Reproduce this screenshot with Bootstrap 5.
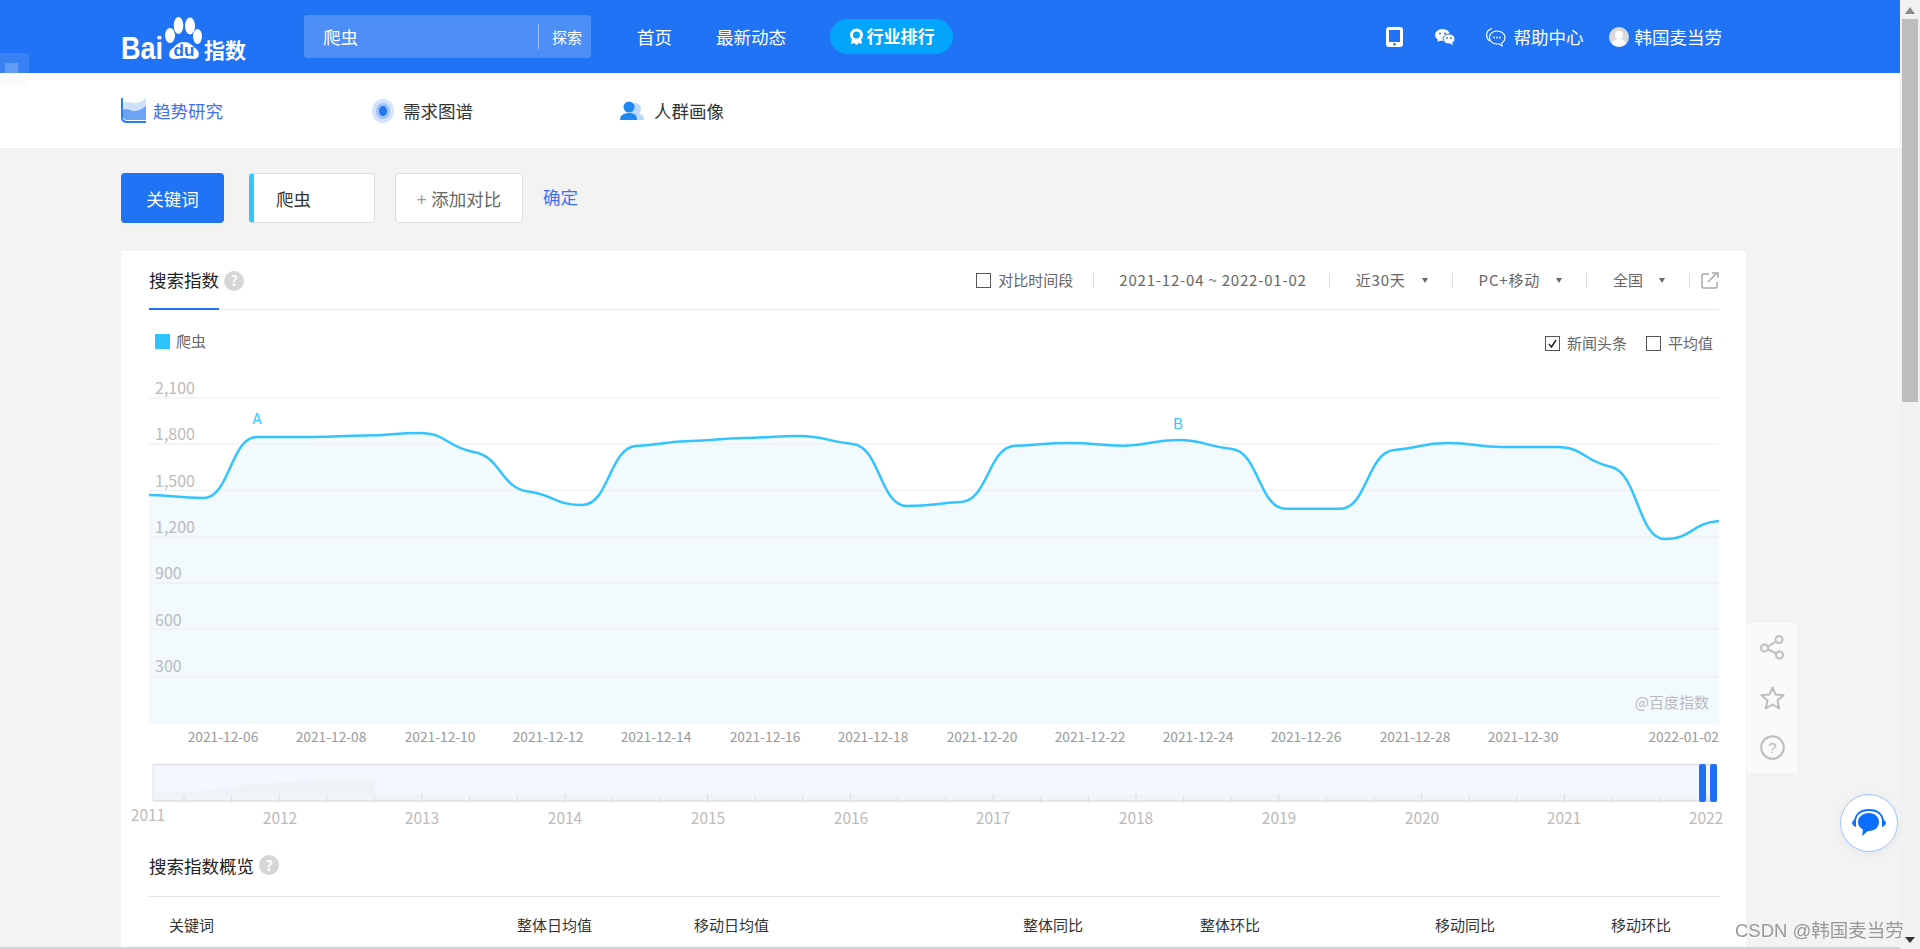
<!DOCTYPE html>
<html lang="zh-CN">
<head>
<meta charset="utf-8">
<title>百度指数</title>
<link href="https://cdn.jsdelivr.net/npm/bootstrap@5.3.0/dist/css/bootstrap.min.css" rel="stylesheet">
<style>
html,body{height:100%;overflow:hidden}
body{font-family:"Noto Sans CJK SC","Liberation Sans",sans-serif;background:#f3f3f3;color:#333;font-size:15px;line-height:1.2}
.shell{height:949px}
.pagecol{width:1900px;height:949px;overflow:hidden;border-bottom:2px solid #d4d4d4}
.sb{width:20px;background:#f1f1f1;padding-left:2px;height:949px}
.sb-up{width:0;height:0;border:5px solid transparent;border-bottom:7px solid #8a8a8a;border-top:0;margin:7px 0 5px 3px}
.sb-thumb{width:16px;height:383px;background:#bdbdbd}
.sb-down{width:0;height:0;border:5px solid transparent;border-top:6px solid #333;border-bottom:0;margin:auto 0 6px 3px}
.topbar{height:73px;background:#2173f5;color:#fff;padding:0 178px 0 121px;font-size:17.5px}
.logo{display:block}
.searchbox{width:287px;height:43px;margin-left:58px;background:rgba(255,255,255,.2);border-radius:3px;padding:0 9px 0 19px}
.searchbox .sdiv{width:1px;height:25px;background:rgba(255,255,255,.45);margin:0 13px 0 auto}
.searchbox .sbtn{font-size:15px}
.tlink{color:#fff;text-decoration:none}
.tl1{margin-left:46px}.tl2{margin-left:44px}
.rankpill{width:123px;height:35px;margin-left:44px;border-radius:18px;background:#02a4fc;font-weight:700;font-size:17px;gap:3px}
.ico-wx{margin-left:32px}.ico-help{margin-left:31px;margin-right:8px}.ico-av{margin-left:25px;margin-right:6px}
.subnav{height:76px;background:#fff;padding-left:121px;border-bottom:1px solid #eee;font-size:17.5px}
.subnav span{color:#333}
.subnav .sub-act{color:#3f6ff2;margin-left:7px}
.sub2{margin-left:149px}.sub3{margin-left:147px}
.sub-tx{margin-left:9px}
.kwrow{padding:24px 0 0 121px;height:102px;font-size:17.5px}
.kwbtn{width:103px;height:50px;background:#2173f5;color:#fff;border-radius:4px;border:0;font-size:17.5px;padding:0}
.kwbox{width:126px;height:50px;margin-left:25px;background:#fff;border:1px solid #ddd;border-left:5px solid #33c6fd;border-radius:4px;padding-left:22px}
.kwadd{width:128px;height:50px;margin-left:20px;background:#fff;border:1px solid #ddd;border-radius:4px;color:#666}
.kwadd .plus{color:#999;margin-right:5px}
.kwok{margin-left:20px;color:#3f6ff2;height:50px;margin-top:-2px}
.mainpanel{width:1625px;margin-left:121px;background:#fff;padding:0 27px 0 28px;height:700px}
.tabrow{height:59px;border-bottom:1px solid #eaeaea}
.tabname{font-size:17.5px;color:#222;height:59px;width:70px;border-bottom:2px solid #2173f5;padding-top:18px;white-space:nowrap;margin-bottom:-1px}
.tabq{margin-top:1px}
.qmark{width:20px;height:20px;border-radius:50%;background:#d6d6d6;color:#fff;font-size:14px;font-weight:700;margin-left:5px}
.tool{font-size:15px;color:#666;white-space:nowrap}
.latin{letter-spacing:.8px}
.cbx{width:15px;height:15px;border:1.5px solid #555;background:#fff;display:inline-block;flex:none}
.cbx-l{margin-left:7px}
.tsep{width:1px;height:15px;background:#ddd}
.s1{margin:0 25px 0 20px}.s2{margin:0 26px 0 22px}.s3{margin:0 26px 0 24px}.s4{margin:0 26px 0 24px}.s5{margin:0 11px 0 24px}
.caret-s{width:0;height:0;border:3.5px solid transparent;border-top:5px solid #666;border-bottom:0;margin-left:16px}
.legendrow{height:70px;padding:22px 6px 0 6px;font-size:15px;color:#666}
.lg-sq{width:15px;height:15px;background:#2ec4fb;margin-right:6px}
.lg-r{margin-top:2px}
.lg-gap{margin-left:19px}
.cb-on{display:flex;align-items:center;justify-content:center}
.chartsvg,.slidersvg{display:block;font-family:"Noto Sans CJK SC","Liberation Sans",sans-serif}
.slidersvg{margin-left:-24px}
.ovt{font-size:17.5px;color:#222;height:63px;padding-top:21px;border-bottom:1px solid #e2e2e2}
.ovgrid{display:grid;grid-template-columns:348px 177px 329px 177px 235px 176px 1fr;padding:19px 0 0 20px;font-size:15px;color:#333}
.lefttab{left:0;top:53px;width:29px;height:33px;background:rgba(215,222,230,.13);border-radius:0 3px 3px 0}
.lefttab i{display:block;width:13px;height:14px;margin:10px 0 0 5px;background:rgba(255,255,255,.22)}
.sidetools{left:1747px;top:623px;width:50px;height:150px;background:#fafafa;padding-top:12px;gap:25.5px}
.chatbtn{left:1840px;top:794px;width:58px;height:58px;border-radius:50%;background:#fff;border:1px solid #9cc4ff;box-shadow:0 2px 10px rgba(0,0,0,.06)}
.wmark{left:1735px;top:920px;font-size:18.5px;color:#999;white-space:nowrap;font-family:"Liberation Sans","Noto Sans CJK SC",sans-serif}
</style>
</head>
<body>
<div class="shell d-flex">
  <div class="pagecol flex-shrink-0">
    <header class="topbar d-flex align-items-center">
      <svg class="logo" width="125" height="54" viewBox="0 -5 125 54" fill="#fff">
        <text x="0" y="44" font-family="Liberation Sans" font-weight="700" font-size="31" textLength="42" lengthAdjust="spacingAndGlyphs">Bai</text>
        <ellipse cx="57.500" cy="10.500" rx="4.800" ry="8.500"/><ellipse cx="69" cy="11" rx="5" ry="8.500"/>
        <ellipse cx="49" cy="20.500" rx="5" ry="7.500"/><ellipse cx="76.500" cy="21.500" rx="4.500" ry="7.500"/>
        <path d="M63 27c5 0 8 3 11 6 5 3 6 11-2 11-3 0-6-1-9-1s-6 1-9 1c-8 0-7-8-2-11 3-3 6-6 11-6z"/>
        <text x="63" y="41" text-anchor="middle" font-family="Liberation Sans" font-weight="700" font-size="17" fill="#2173f5">du</text>
        <text x="83" y="43" font-family="Noto Sans CJK SC" font-weight="700" font-size="21" textLength="42">指数</text>
      </svg>
      <div class="searchbox d-flex align-items-center"><span>爬虫</span><i class="sdiv"></i><span class="sbtn">探索</span></div>
      <a class="tlink tl1" href="#">首页</a>
      <a class="tlink tl2" href="#">最新动态</a>
      <div class="rankpill d-flex align-items-center justify-content-center">
        <svg width="15" height="18" viewBox="0 0 15 18"><circle cx="7.500" cy="7" r="5" fill="none" stroke="#fff" stroke-width="3"/><path d="M3 11l-1 5 3-1 2.500 2 2.500-2 3 1-1-5z" fill="#fff"/></svg>
        <span>行业排行</span>
      </div>
      <div class="ms-auto d-flex align-items-center">
        <svg width="17" height="20" viewBox="0 0 17 20"><rect width="17" height="20" rx="3" fill="#fff"/><rect x="3" y="3" width="11" height="12" fill="#2173f5"/><circle cx="8.500" cy="17.200" r="1.300" fill="#2173f5"/></svg>
        <svg class="ico-wx" width="20" height="16" viewBox="0 0 20 16" fill="#fff"><ellipse cx="7.500" cy="6" rx="7.500" ry="6"/><path d="M3 10l-.5 3 3.500-2z"/><ellipse cx="14" cy="10" rx="6" ry="5" stroke="#2173f5"/><path d="M17 13.500l1 2.500-3.500-1.500z"/><g fill="#2173f5"><circle cx="5" cy="4.500" r="1"/><circle cx="10" cy="4.500" r="1"/><circle cx="12" cy="9" r=".9"/><circle cx="16" cy="9" r=".9"/></g></svg>
        <svg class="ico-help" width="20" height="20" viewBox="0 0 20 20" fill="none" stroke="#fff" stroke-width="1.100"><path d="M6 1.500C2.500 2.500.6 5 .6 8c0 2.500 1 4.500 2.900 6"/><path d="M11 4c4.500 0 8 2.800 8 6.500 0 2.300-1.300 4.300-3.300 5.400l.3 3-3-2.100c-.6.200-1.300.2-2 .2-4.500 0-7.500-2.800-7.500-6.500S6.500 4 11 4z"/><g fill="#fff" stroke="none"><circle cx="8" cy="10.500" r=".9"/><circle cx="11" cy="10.500" r=".9"/><circle cx="14" cy="10.500" r=".9"/></g></svg>
        <span>帮助中心</span>
        <svg class="ico-av" width="20" height="20" viewBox="0 0 20 20"><circle cx="10" cy="10" r="10" fill="#d9d9d9"/><circle cx="10" cy="8" r="4" fill="#fff"/><path d="M3 17c1-4 4-5 7-5s6 1 7 5a10 10 0 0 1-14 0z" fill="#fff"/></svg>
        <span>韩国麦当劳</span>
      </div>
    </header>

    <nav class="subnav d-flex align-items-center">
      <svg width="25" height="25" viewBox="0 0 25 25"><path d="M1 0v19c0 3 2 5 5 5h19" fill="none" stroke="#2b7cf0" stroke-width="2"/><path d="M2 5c4-3 7 0 11 0s7-1 12-5v22H6c-2 0-4-2-4-4z" fill="#cfe0fb"/><path d="M2 12c4-3 7 1 11 1s8-2 12-5v14H6c-2 0-4-2-4-4z" fill="#6ba3f5"/></svg>
      <span class="sub-act">趋势研究</span>
      <svg class="sub2" width="22" height="24" viewBox="0 0 22 24"><ellipse cx="11" cy="12" rx="11" ry="12" fill="#d3e4fc"/><ellipse cx="11" cy="12" rx="7" ry="8" fill="#9dc2f8"/><ellipse cx="11" cy="12" rx="4" ry="5" fill="#2277ef"/></svg>
      <span class="sub-tx">需求图谱</span>
      <svg class="sub3" width="25" height="20" viewBox="0 0 25 20"><circle cx="15" cy="8" r="6" fill="#bcd8fa"/><path d="M9 19c0-5 3-7 7-7s8 2 8 7z" fill="#bcd8fa"/><circle cx="9" cy="6" r="5.500" fill="#1e88f0"/><path d="M0 19c0-5 4-7 9-7s8 2 8 7z" fill="#1e88f0"/></svg>
      <span class="sub-tx">人群画像</span>
    </nav>

    <section class="kwrow d-flex align-items-start">
      <button class="kwbtn" type="button">关键词</button>
      <div class="kwbox d-flex align-items-center">爬虫</div>
      <div class="kwadd d-flex align-items-center justify-content-center"><span class="plus">+</span>添加对比</div>
      <div class="kwok d-flex align-items-center">确定</div>
    </section>

    <main class="mainpanel">
      <div class="tabrow d-flex align-items-center">
        <div class="tabname d-flex align-items-start">搜索指数</div>
        <div class="qmark tabq d-flex align-items-center justify-content-center">?</div>
        <div class="ms-auto d-flex align-items-center tool">
          <i class="cbx"></i><span class="cbx-l">对比时间段</span><i class="tsep s1"></i>
          <span class="latin">2021-12-04 ~ 2022-01-02</span><i class="tsep s2"></i>
          <span class="latin">近30天</span><i class="caret-s"></i><i class="tsep s3"></i>
          <span class="latin">PC+移动</span><i class="caret-s"></i><i class="tsep s4"></i>
          <span>全国</span><i class="caret-s"></i><i class="tsep s5"></i>
          <svg width="18" height="17" viewBox="0 0 18 17" fill="none" stroke="#aaa" stroke-width="1.500"><path d="M8 2H2.500A1.500 1.500 0 0 0 1 3.500v11A1.500 1.500 0 0 0 2.500 16h12a1.500 1.500 0 0 0 1.500-1.500V10"/><path d="M7 10L16 1M11 1h6v5"/></svg>
        </div>
      </div>
      <div class="legendrow d-flex justify-content-between align-items-start">
        <div class="d-flex align-items-center"><i class="lg-sq"></i><span>爬虫</span></div>
        <div class="d-flex align-items-center lg-r">
          <span class="cbx cb-on"><svg width="11" height="11" viewBox="0 0 11 11" fill="none" stroke="#222" stroke-width="1.500"><path d="M2 6l2.500 3L9 2"/></svg></span><span class="cbx-l">新闻头条</span>
          <i class="cbx lg-gap"></i><span class="cbx-l">平均值</span>
        </div>
      </div>
      <svg id="chart" class="chartsvg" width="1570" height="375" viewBox="149 380 1570 375">
        <path id="area" fill="#f2fafe"/>
        <g stroke="#eff2f5" stroke-width="1.500">
          <path d="M149 398H1719M149 444H1719M149 490.500H1719M149 537H1719M149 583H1719M149 629H1719M149 677H1719"/>
        </g>
        <path id="line" fill="none" stroke="#33c4ff" stroke-width="2.500"/>
        <g fill="#bbb" font-size="16">
          <text x="155" y="394">2,100</text><text x="155" y="440">1,800</text><text x="155" y="487">1,500</text><text x="155" y="533">1,200</text><text x="155" y="579">900</text><text x="155" y="626">600</text><text x="155" y="672">300</text>
        </g>
        <g fill="#33c4ff" font-size="15"><text x="257" y="424" text-anchor="middle">A</text><text x="1178" y="429" text-anchor="middle">B</text></g>
        <text x="1709" y="708" fill="#bbb" font-size="15" text-anchor="end">@百度指数</text>
        <g fill="#999" font-size="13.750" text-anchor="middle">
          <text x="223" y="742">2021-12-06</text><text x="331" y="742">2021-12-08</text><text x="440" y="742">2021-12-10</text><text x="548" y="742">2021-12-12</text><text x="656" y="742">2021-12-14</text><text x="765" y="742">2021-12-16</text><text x="873" y="742">2021-12-18</text><text x="982" y="742">2021-12-20</text><text x="1090" y="742">2021-12-22</text><text x="1198" y="742">2021-12-24</text><text x="1306" y="742">2021-12-26</text><text x="1415" y="742">2021-12-28</text><text x="1523" y="742">2021-12-30</text><text x="1719" y="742" text-anchor="end">2022-01-02</text>
        </g>
      </svg>
      <svg id="slider" class="slidersvg" width="1600" height="79" viewBox="125 755 1600 79">
        <rect x="153" y="765" width="1564" height="36" fill="#f4f8fe"/>
        <rect x="153" y="794" width="1564" height="7" fill="#f1f4f9"/>
        <path d="M153 792h22l40-2 30-5 30-2 30-2 30-1 20-1 20 1v14H153z" fill="#eff2f6"/>
        <path d="M153 764.500H1717M153 801H1717" stroke="#dcdfe4" stroke-width="1.500"/>
        <path d="M153 764v37" stroke="#dcdfe4"/>
        <path id="ticks" stroke="#dcdfe4" stroke-width="1"/>
        <rect x="1699" y="764" width="7" height="38" rx="2" fill="#2070f5"/>
        <rect x="1710" y="764" width="7" height="38" rx="2" fill="#2070f5"/>
        <g fill="#bbb" font-size="15.500" text-anchor="middle">
          <text x="148" y="821">2011</text><text x="280" y="824">2012</text><text x="422" y="824">2013</text><text x="565" y="824">2014</text><text x="708" y="824">2015</text><text x="851" y="824">2016</text><text x="993" y="824">2017</text><text x="1136" y="824">2018</text><text x="1279" y="824">2019</text><text x="1422" y="824">2020</text><text x="1564" y="824">2021</text><text x="1706" y="824">2022</text>
        </g>
      </svg>
      <div class="ovt d-flex align-items-start">搜索指数概览<span class="qmark d-flex align-items-center justify-content-center">?</span></div>
      <div class="ovgrid"><span>关键词</span><span>整体日均值</span><span>移动日均值</span><span>整体同比</span><span>整体环比</span><span>移动同比</span><span>移动环比</span></div>
    </main>
  </div>
  <aside class="sb d-flex flex-column flex-shrink-0"><i class="sb-up"></i><i class="sb-thumb"></i><i class="sb-down"></i></aside>
</div>

<div class="lefttab position-fixed"><i></i></div>

<div class="sidetools position-fixed d-flex flex-column align-items-center">
  <svg width="24" height="25" viewBox="0 0 24 25" fill="none" stroke="#bdbdbd" stroke-width="2"><circle cx="4.500" cy="13" r="3.500"/><circle cx="19" cy="4.500" r="3.500"/><circle cx="19.500" cy="20" r="3.500"/><path d="M8 11.500l8-5M8 14.500l8.500 4"/></svg>
  <svg width="25" height="24" viewBox="0 0 25 24" fill="none" stroke="#bdbdbd" stroke-width="2" stroke-linejoin="round"><path d="M12.500 1.500l3 7 8 .8-6 5.200 1.700 8-6.700-4-6.700 4 1.700-8-6-5.200 8-.8z"/></svg>
  <svg width="25" height="25" viewBox="0 0 25 25"><circle cx="12.500" cy="12.500" r="11.300" fill="none" stroke="#bdbdbd" stroke-width="2"/><text x="12.500" y="18" text-anchor="middle" font-size="15" fill="#bdbdbd" font-family="Liberation Sans">?</text></svg>
</div>

<div class="chatbtn position-fixed d-flex align-items-center justify-content-center">
  <svg width="34" height="28" viewBox="0 0 34 28"><path d="M3 13C3 5 9 1 17 1s14 4 14 12" fill="none" stroke="#0a6fff" stroke-width="1.800"/><path d="M4 10v8C1.500 17 0 15.500 0 14s1.500-3 4-4zM30 10v8c2.500-1 4-2.500 4-4s-1.500-3-4-4z" fill="#0a6fff"/><path d="M17 4c6 0 10 4 10 9s-4 9-10 9h-1l-6 5 1-6.500c-3-1.500-5-4-5-7.500 0-5 5-9 11-9z" fill="#0a6fff"/></svg>
</div>

<div class="wmark position-fixed">CSDN @韩国麦当劳</div>

<script src="https://cdn.jsdelivr.net/npm/bootstrap@5.3.0/dist/js/bootstrap.bundle.min.js"></script>
<script>
(function(){
  var ys=[495,498,437,437,435.5,433,452,491.5,505,446,441,438,436,444,506,502,445.7,443,445.7,440,449,508.7,508.7,450,443,447,447,466.7,539,521];
  var h=1570/29,pts=ys.map(function(y,i){return [149+h*i,y];}),n=pts.length,s=[],m=[];
  for(var i=0;i<n-1;i++)s[i]=(ys[i+1]-ys[i])/h;
  m[0]=s[0]*.2;m[n-1]=s[n-2]*.2;
  for(i=1;i<n-1;i++){m[i]=s[i-1]*s[i]<=0?0:.35*2*s[i-1]*s[i]/(s[i-1]+s[i]);}
  var d="M"+pts[0][0]+" "+pts[0][1];
  for(i=0;i<n-1;i++){
    var k=h*.5;
    d+="C"+(pts[i][0]+k).toFixed(1)+" "+(pts[i][1]+m[i]*k).toFixed(1)+" "+(pts[i+1][0]-k).toFixed(1)+" "+(pts[i+1][1]-m[i+1]*k).toFixed(1)+" "+pts[i+1][0].toFixed(1)+" "+pts[i+1][1];
  }
  document.getElementById("line").setAttribute("d",d);
  document.getElementById("area").setAttribute("d",d+"V724H149Z");
  var t="";
  for(i=0;i<33;i++){var x=184+47.6*i;t+="M"+x.toFixed(1)+" "+(i%3==2?794:796)+"V803";}
  document.getElementById("ticks").setAttribute("d",t);
})();
</script>
</body>
</html>
